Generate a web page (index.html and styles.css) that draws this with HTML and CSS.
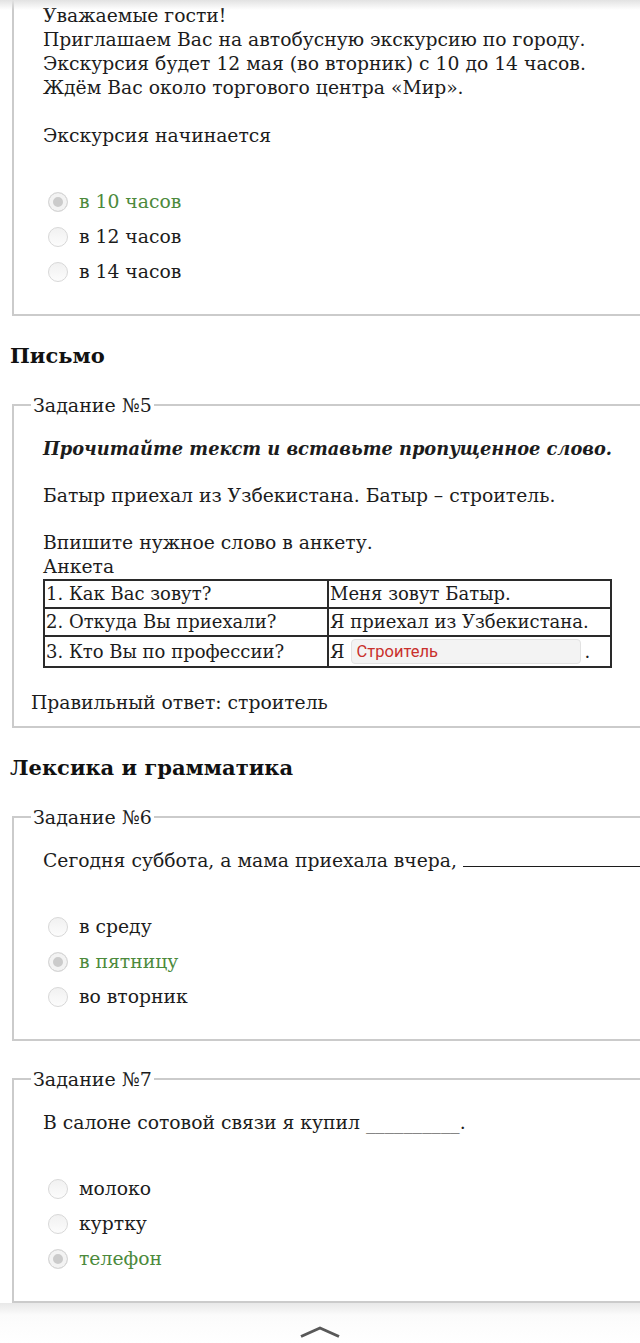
FILE: index.html
```html
<!DOCTYPE html>
<html lang="ru">
<head>
<meta charset="utf-8">
<title>Тест по русскому языку</title>
<link rel="stylesheet" href="styles.css">
</head>
<body>
<div class="topshade"></div>

<fieldset class="task first">
  <div class="q">
    <p>Уважаемые гости!<br>Приглашаем Вас на автобусную экскурсию по городу.<br>Экскурсия будет 12 мая (во вторник) с 10 до 14 часов.<br>Ждём Вас около торгового центра «Мир».</p>
    <p class="gap">Экскурсия начинается</p>
    <div class="opts">
      <div class="opt ok"><span class="radio on"></span>в 10 часов</div>
      <div class="opt"><span class="radio"></span>в 12 часов</div>
      <div class="opt"><span class="radio"></span>в 14 часов</div>
    </div>
  </div>
</fieldset>

<h2>Письмо</h2>

<fieldset class="task short">
  <legend>Задание №5</legend>
  <div class="q">
    <p class="bi">Прочитайте текст и вставьте пропущенное слово.</p>
    <p class="gap2">Батыр приехал из Узбекистана. Батыр – строитель.</p>
    <p class="gap2">Впишите нужное слово в анкету.<br>Анкета</p>
    <table class="anketa">
      <colgroup><col class="c1"><col class="c2"></colgroup>
      <tr><td>1. Как Вас зовут?</td><td>Меня зовут Батыр.</td></tr>
      <tr><td>2. Откуда Вы приехали?</td><td>Я приехал из Узбекистана.</td></tr>
      <tr><td class="tall">3. Кто Вы по профессии?</td><td class="tall"><div class="fill">Я<input class="field" type="text" value="Строитель" readonly>.</div></td></tr>
    </table>
  </div>
  <p class="answer">Правильный ответ: строитель</p>
</fieldset>

<h2>Лексика и грамматика</h2>

<fieldset class="task">
  <legend>Задание №6</legend>
  <div class="q">
    <p class="nowrap">Сегодня суббота, а мама приехала вчера, <span class="blank"></span></p>
    <div class="opts">
      <div class="opt"><span class="radio"></span>в среду</div>
      <div class="opt ok"><span class="radio on"></span>в пятницу</div>
      <div class="opt"><span class="radio"></span>во вторник</div>
    </div>
  </div>
</fieldset>

<fieldset class="task">
  <legend>Задание №7</legend>
  <div class="q">
    <p>В салоне сотовой связи я купил __________.</p>
    <div class="opts">
      <div class="opt"><span class="radio"></span>молоко</div>
      <div class="opt"><span class="radio"></span>куртку</div>
      <div class="opt ok"><span class="radio on"></span>телефон</div>
    </div>
  </div>
</fieldset>

<div class="bottombar">
  <svg class="chev" width="40" height="12" viewBox="0 0 40 12"><polyline points="1,10.5 20,2 39,10.5" fill="none" stroke="#585858" stroke-width="3" stroke-linejoin="round"/></svg>
</div>
</body>
</html>
```

FILE: styles.css
```css
html {
  overflow-x: hidden;
}

body {
  margin: 0;
  position: relative;
  font-family: "DejaVu Serif", "Liberation Serif", serif;
  font-size: 18.75px;
  line-height: 24px;
  color: #1c1c1c;
  background: #fff;
}

.topshade {
  position: absolute;
  top: 0;
  left: 0;
  right: 0;
  height: 10px;
  background: linear-gradient(#e2e2e2, rgba(255, 255, 255, 0));
}

p {
  margin: 0;
}

.task {
  margin: 0 0 0 12px;
  width: 700px;
  min-width: 0;
  border: 2px solid #cbcbcb;
  padding: 20px 0 25px 17px;
}

.task + .task {
  margin-top: 26px;
}

.task.first {
  border-top: none;
  padding-top: 4px;
}

.task.short {
  padding-bottom: 11px;
}

legend {
  padding: 0 2px;
  font-size: 19px;
  line-height: 24px;
}

.q {
  margin-left: 12px;
}

.gap {
  margin-top: 24px;
}

.gap2 {
  margin-top: 23px;
}

.bi {
  font-weight: bold;
  font-style: italic;
  font-size: 17.8px;
}

.nowrap {
  white-space: nowrap;
}

.blank {
  display: inline-block;
  width: 220px;
  height: 0;
  border-bottom: 1px solid #1c1c1c;
}

h2 {
  margin: 26px 0 23px 10px;
  font-size: 21px;
  line-height: 28px;
  font-weight: bold;
  color: #111;
}

.opts {
  margin-top: 36px;
  padding-left: 5px;
}

.opt {
  display: flex;
  align-items: center;
  gap: 11px;
  height: 35px;
}

.opt.ok {
  color: #4c8a3c;
}

.radio {
  flex: none;
  width: 20px;
  height: 20px;
  box-sizing: border-box;
  border-radius: 50%;
  border: 1px solid #d8d8d8;
  background: linear-gradient(#f1f1f1, #fcfcfc);
}

.radio.on {
  background: #cbcbcb;
  box-shadow: inset 0 0 0 4px #f3f3f3;
}

.anketa {
  border-collapse: collapse;
  width: 569px;
  table-layout: fixed;
  font-size: 18px;
}

.anketa .c1 {
  width: 284px;
}

.anketa td {
  border: 2px solid #2a2a2a;
  padding: 1px 1px;
  line-height: 24px;
  vertical-align: middle;
  white-space: nowrap;
}

.anketa td.tall {
  padding: 0 1px;
}

.fill {
  display: flex;
  align-items: center;
  height: 29px;
}

.field {
  margin: 0 4px 0 6px;
  width: 230px;
  height: 25px;
  box-sizing: border-box;
  padding: 0 5px;
  border: 1px solid #e2e2e2;
  border-radius: 4px;
  background: #f3f3f3;
  font-family: Roboto, "Liberation Sans", sans-serif;
  font-size: 16.5px;
  color: #c9302c;
  outline: none;
}

.answer {
  margin-top: 23px;
}

.bottombar {
  height: 40px;
  background: linear-gradient(#e8e8e8, #fbfbfb 12px, #fff);
  display: flex;
  justify-content: center;
  align-items: flex-start;
}

.chev {
  margin-top: 23px;
}
```
